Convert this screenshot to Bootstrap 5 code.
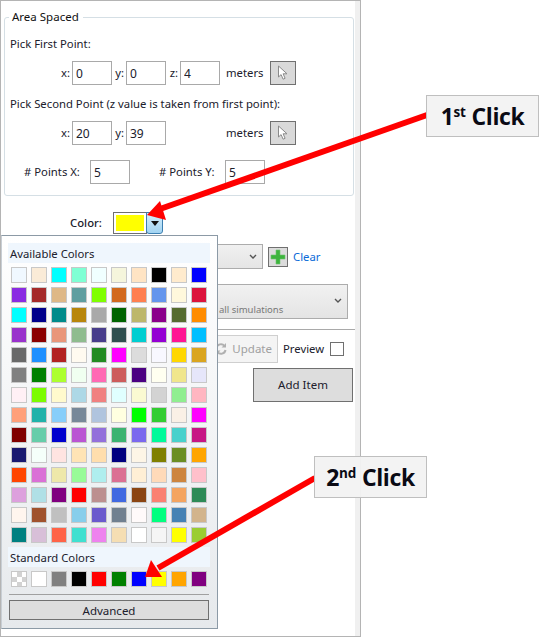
<!DOCTYPE html>
<html lang="en">
<head>
<meta charset="utf-8">
<title>Area Spaced</title>
<link href="https://cdn.jsdelivr.net/npm/bootstrap@5.3.0/dist/css/bootstrap.min.css" rel="stylesheet">
<style>
html,body{margin:0;background:#fff;}
body{width:541px;height:638px;overflow:hidden;position:relative;font-family:"Noto Sans","Liberation Sans",sans-serif;font-size:11.3px;line-height:16px;color:#20202c;}
.pane{width:361px;height:637px;border:1px solid #b4b4b4;background:#f0f0f0;padding-right:5px;}
.pane-in{background:#fff;height:100%;padding:8px 0 0 3px;}
fieldset.grp{width:350px;border:1px solid #d5dfe5;border-radius:3px;padding:0 0 11px 5px;margin:0;}
fieldset.grp legend{float:none;width:auto;font-size:11.5px;line-height:16px;margin:0 0 0 -1px;padding:0 4px 0 3px;color:#111;}
.pick{margin-top:11px;}
.pick2{margin-top:11px;}
.prow{display:flex;align-items:center;height:24px;margin-top:9px;}
.prow3{margin-top:15px;}
.prow label,.prow span{display:block;white-space:nowrap;}
.form-control.num{width:40px;height:24px;min-height:0;padding:0 3px;font-size:12px;line-height:20px;border:1px solid #a9a9a9;border-radius:0;color:#20202c;flex:none;}
.lx{width:62px;text-align:right;padding-right:2px;flex:none;}
.ly{width:14px;text-align:right;padding-right:2px;flex:none;}
.gapz{width:54px;flex:none;}
.mt-lab{margin-left:6px;width:44px;flex:none;}
.pt-btn{width:26px;height:24px;border:1px solid #707070;background:#d9d9d9;border-radius:0;padding:0;display:flex;align-items:center;justify-content:center;flex:none;}
.lpx{margin-left:14px;width:66px;flex:none;}
.lpy{margin-left:29px;width:66px;flex:none;}
.clr-row{display:flex;align-items:center;height:22px;margin-top:16px;padding-left:66px;}
.clr-lab{width:43px;flex:none;font-weight:500;}
.clr-sw{width:34px;height:22px;border:1px solid #707070;padding:2px;background:#fff;flex:none;}
.clr-sw i{display:block;height:100%;background:#ff0;}
.clr-btn{width:17px;height:22px;border:1px solid #3c7fb1;border-radius:0 0 3px 3px;background:linear-gradient(#d6effc,#a2d4f2);display:flex;align-items:flex-start;justify-content:center;padding-top:8px;margin-left:-1px;flex:none;}
.sel-row{display:flex;align-items:center;height:25px;margin-top:10px;padding-left:96px;}
.fake-sel{width:163px;height:25px;border:1px solid #acacac;background:linear-gradient(#f0f0f0,#e5e5e5);display:flex;align-items:center;justify-content:flex-end;padding-right:5px;flex:none;}
.plus-btn{width:20px;height:20px;border:1px solid #707070;background:#dcdcdc;margin-left:5px;padding:0;border-radius:0;flex:none;display:flex;align-items:center;justify-content:center;}
.clear-lnk{margin-left:5px;color:#0a6ad8;text-decoration:none;font-size:11.3px;}
.exp-box{width:248px;height:35px;margin:15px 0 0 96px;border:1px solid #acacac;background:linear-gradient(#f1f1f1,#e4e4e4);display:flex;padding-left:118px;align-items:flex-end;justify-content:space-between;}
.exp-box small{font-size:9.5px;line-height:13px;color:#777;padding-bottom:2px;}
.exp-box svg{margin:0 5px 14px 0;}
.sep{height:1px;background:#a9a9a9;margin:10px 0 0 -3px;}
.upd-row{display:flex;align-items:center;height:28px;margin-top:5px;padding-left:96px;}
.upd-btn{width:178px;height:28px;border:1px solid #cfcfcf;background:#f4f4f4;color:#a0a0a0;display:flex;align-items:center;justify-content:flex-end;gap:5px;padding:0 5px 0 0;border-radius:0;font-size:11.5px;flex:none;}
.prev-lab{margin-left:5px;width:47px;flex:none;}
.form-check-input.prev-chk{width:14px;height:14px;margin:0;border:1px solid #707070;border-radius:0;float:none;flex:none;}
.add-wrap{display:flex;justify-content:flex-end;padding-right:2px;margin-top:5px;}
.add-btn{width:100px;height:34px;border:1px solid #707070;border-radius:0;background:#dddddd;color:#20202c;font-size:11.5px;padding:0;}
.add-btn:hover{background:#ddd;color:#20202c;border-color:#707070;}
.cpop{position:absolute;left:1px;top:235px;width:217px;height:394px;background:linear-gradient(#fff,#e6e9ec);border:1px solid #8c9aa6;border-left-color:#c8ced4;padding:7px 6px 0 6px;z-index:3;}
.chead{background:#eff6fd;height:20px;line-height:22px;padding-left:2px;font-size:11.3px;color:#20202c;width:202px;}
.cgrid{display:grid;grid-template-columns:repeat(10,16px);gap:4px;padding:4px 0 4px 3px;}
.cgrid i{display:block;width:16px;height:16px;border:1.5px solid #c8c8c8;}
.cgrid i.chk{background:conic-gradient(#d2d2d2 25%,#fff 0 50%,#d2d2d2 0 75%,#fff 0) 0 0/10px 10px;}
.csep{height:1px;background:#a0a0a0;margin:3px 0 5px 1px;width:200px;}
.adv-btn{display:block;width:200px;height:20px;margin-left:1px;border:1px solid #707070;border-radius:0;background:#ddd;padding:0;font-size:11.5px;line-height:17px;color:#20202c;}
.adv-btn:hover{background:#ddd;color:#20202c;border-color:#707070;}
.arrows{position:absolute;left:0;top:0;z-index:4;pointer-events:none;}
.note{position:absolute;z-index:5;width:113px;height:42px;background:rgba(242,242,242,.96);border:1px solid #bfbfbf;font-family:"Open Sans","Liberation Sans",sans-serif;font-weight:700;font-size:23px;letter-spacing:-.4px;line-height:40px;color:#0a0a14;text-align:center;white-space:nowrap;}
.note sup{font-size:13.5px;top:-.6em;line-height:0;letter-spacing:0;}
.n1{left:426px;top:95px;}
.n2{left:314px;top:456px;}
</style>
</head>
<body>
<div class="pane">
 <div class="pane-in">
  <fieldset class="grp">
   <legend>Area Spaced</legend>
   <div class="pick">Pick First Point:</div>
   <div class="prow">
    <label class="lx">x:</label><input class="form-control num" value="0">
    <label class="ly">y:</label><input class="form-control num" value="0">
    <label class="ly">z:</label><input class="form-control num" value="4">
    <span class="mt-lab">meters</span>
    <button class="pt-btn" type="button" aria-label="Pick"><svg width="12" height="16" viewBox="0 0 12 16"><path d="M1.500 1v11l2.600-2.400 2 4.600 2-.9-2-4.500H10z" fill="#fff" stroke="#8a8a8a"/></svg></button>
   </div>
   <div class="pick2">Pick Second Point (z value is taken from first point):</div>
   <div class="prow">
    <label class="lx">x:</label><input class="form-control num" value="20">
    <label class="ly">y:</label><input class="form-control num" value="39">
    <span class="gapz"></span>
    <span class="mt-lab">meters</span>
    <button class="pt-btn" type="button" aria-label="Pick"><svg width="12" height="16" viewBox="0 0 12 16"><path d="M1.500 1v11l2.600-2.400 2 4.600 2-.9-2-4.500H10z" fill="#fff" stroke="#8a8a8a"/></svg></button>
   </div>
   <div class="prow prow3">
    <label class="lpx"># Points X:</label><input class="form-control num" value="5">
    <label class="lpy"># Points Y:</label><input class="form-control num" value="5">
   </div>
  </fieldset>
  <div class="clr-row">
   <span class="clr-lab">Color:</span>
   <div class="clr-sw"><i></i></div>
   <div class="clr-btn"><svg width="8" height="5" viewBox="0 0 8 5"><path d="M0 0h8L4 5z" fill="#111"/></svg></div>
  </div>
  <div class="sel-row">
   <div class="fake-sel"><svg width="8" height="6" viewBox="0 0 8 6"><path d="M1 1l3 3 3-3" fill="none" stroke="#555" stroke-width="1.400"/></svg></div>
   <button class="plus-btn" type="button" aria-label="Add"><svg width="16" height="16" viewBox="0 0 16 16"><path d="M6 1h4v5h5v4h-5v5H6v-5H1V6h5z" fill="#3db43d" stroke="#6ec46e" stroke-width=".6"/></svg></button>
   <a class="clear-lnk" href="#">Clear</a>
  </div>
  <div class="exp-box"><small>all simulations</small><svg width="8" height="6" viewBox="0 0 8 6"><path d="M1 1l3 3 3-3" fill="none" stroke="#555" stroke-width="1.400"/></svg></div>
  <div class="sep"></div>
  <div class="upd-row">
   <button class="upd-btn" type="button"><svg width="12" height="12" viewBox="0 0 12 12"><path d="M1.500 5a4.500 4.500 0 0 1 8-2M10.500 7a4.500 4.500 0 0 1-8 2" fill="none" stroke="#b0b0b0" stroke-width="2"/><path d="M11 0v4.500H6.500zM1 12V7.500h4.500z" fill="#b0b0b0"/></svg>Update</button>
   <span class="prev-lab">Preview</span>
   <input class="form-check-input prev-chk" type="checkbox" aria-label="Preview">
  </div>
  <div class="add-wrap"><button class="btn add-btn" type="button">Add Item</button></div>
 </div>
</div>

<div class="cpop">
 <div class="chead">Available Colors</div>
 <div class="cgrid">
  <i style="background:aliceblue"></i><i style="background:antiquewhite"></i><i style="background:aqua"></i><i style="background:aquamarine"></i><i style="background:azure"></i><i style="background:beige"></i><i style="background:bisque"></i><i style="background:black"></i><i style="background:blanchedalmond"></i><i style="background:blue"></i>
  <i style="background:blueviolet"></i><i style="background:brown"></i><i style="background:burlywood"></i><i style="background:cadetblue"></i><i style="background:chartreuse"></i><i style="background:chocolate"></i><i style="background:coral"></i><i style="background:cornflowerblue"></i><i style="background:cornsilk"></i><i style="background:crimson"></i>
  <i style="background:cyan"></i><i style="background:darkblue"></i><i style="background:darkcyan"></i><i style="background:darkgoldenrod"></i><i style="background:darkgray"></i><i style="background:darkgreen"></i><i style="background:darkkhaki"></i><i style="background:darkmagenta"></i><i style="background:darkolivegreen"></i><i style="background:darkorange"></i>
  <i style="background:darkorchid"></i><i style="background:darkred"></i><i style="background:darksalmon"></i><i style="background:darkseagreen"></i><i style="background:darkslateblue"></i><i style="background:darkslategray"></i><i style="background:darkturquoise"></i><i style="background:darkviolet"></i><i style="background:deeppink"></i><i style="background:deepskyblue"></i>
  <i style="background:dimgray"></i><i style="background:dodgerblue"></i><i style="background:firebrick"></i><i style="background:floralwhite"></i><i style="background:forestgreen"></i><i style="background:fuchsia"></i><i style="background:gainsboro"></i><i style="background:ghostwhite"></i><i style="background:gold"></i><i style="background:goldenrod"></i>
  <i style="background:gray"></i><i style="background:green"></i><i style="background:greenyellow"></i><i style="background:honeydew"></i><i style="background:hotpink"></i><i style="background:indianred"></i><i style="background:indigo"></i><i style="background:ivory"></i><i style="background:khaki"></i><i style="background:lavender"></i>
  <i style="background:lavenderblush"></i><i style="background:lawngreen"></i><i style="background:lemonchiffon"></i><i style="background:lightblue"></i><i style="background:lightcoral"></i><i style="background:lightcyan"></i><i style="background:lightgoldenrodyellow"></i><i style="background:lightgray"></i><i style="background:lightgreen"></i><i style="background:lightpink"></i>
  <i style="background:lightsalmon"></i><i style="background:lightseagreen"></i><i style="background:lightskyblue"></i><i style="background:lightslategray"></i><i style="background:lightsteelblue"></i><i style="background:lightyellow"></i><i style="background:lime"></i><i style="background:limegreen"></i><i style="background:linen"></i><i style="background:magenta"></i>
  <i style="background:maroon"></i><i style="background:mediumaquamarine"></i><i style="background:mediumblue"></i><i style="background:mediumorchid"></i><i style="background:mediumpurple"></i><i style="background:mediumseagreen"></i><i style="background:mediumslateblue"></i><i style="background:mediumspringgreen"></i><i style="background:mediumturquoise"></i><i style="background:mediumvioletred"></i>
  <i style="background:midnightblue"></i><i style="background:mintcream"></i><i style="background:mistyrose"></i><i style="background:moccasin"></i><i style="background:navajowhite"></i><i style="background:navy"></i><i style="background:oldlace"></i><i style="background:olive"></i><i style="background:olivedrab"></i><i style="background:orange"></i>
  <i style="background:orangered"></i><i style="background:orchid"></i><i style="background:palegoldenrod"></i><i style="background:palegreen"></i><i style="background:paleturquoise"></i><i style="background:palevioletred"></i><i style="background:papayawhip"></i><i style="background:peachpuff"></i><i style="background:peru"></i><i style="background:pink"></i>
  <i style="background:plum"></i><i style="background:powderblue"></i><i style="background:purple"></i><i style="background:red"></i><i style="background:rosybrown"></i><i style="background:royalblue"></i><i style="background:saddlebrown"></i><i style="background:salmon"></i><i style="background:sandybrown"></i><i style="background:seagreen"></i>
  <i style="background:seashell"></i><i style="background:sienna"></i><i style="background:silver"></i><i style="background:skyblue"></i><i style="background:slateblue"></i><i style="background:slategray"></i><i style="background:snow"></i><i style="background:springgreen"></i><i style="background:steelblue"></i><i style="background:tan"></i>
  <i style="background:teal"></i><i style="background:thistle"></i><i style="background:tomato"></i><i style="background:turquoise"></i><i style="background:violet"></i><i style="background:wheat"></i><i style="background:white"></i><i style="background:whitesmoke"></i><i style="background:yellow"></i><i style="background:yellowgreen"></i>
 </div>
 <div class="chead">Standard Colors</div>
 <div class="cgrid">
  <i class="chk"></i><i style="background:white"></i><i style="background:gray"></i><i style="background:black"></i><i style="background:red"></i><i style="background:green"></i><i style="background:blue"></i><i style="background:yellow"></i><i style="background:orange"></i><i style="background:purple"></i>
 </div>
 <div class="csep"></div>
 <button class="btn adv-btn" type="button">Advanced</button>
</div>

<svg class="arrows" width="541" height="638" viewBox="0 0 541 638" aria-hidden="true">
 <path d="M427 115L160 209" stroke="#f00" stroke-width="6" fill="none"/>
 <path d="M147 215L160 201L166 220z" fill="#f00"/>
 <path d="M315 478L158 568" stroke="#f00" stroke-width="6" fill="none"/>
 <path d="M145 577L151 560L162 577z" fill="#f00"/>
</svg>
<div class="note n1">1<sup>st</sup> Click</div>
<div class="note n2">2<sup>nd</sup> Click</div>
</body>
</html>
